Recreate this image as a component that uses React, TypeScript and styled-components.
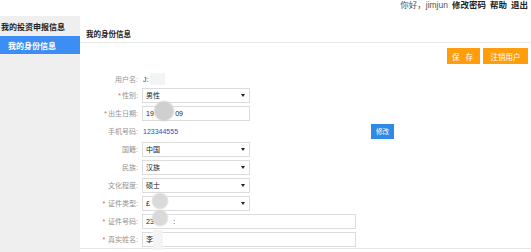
import styled, { createGlobalStyle } from "styled-components";

const GlobalStyle = createGlobalStyle`
  html, body {
    margin: 0;
    padding: 0;
    background: #ffffff;
    font-family: "Liberation Sans", "Noto Sans CJK SC", sans-serif;
    overflow: hidden;
  }
`;

const Page = styled.div`
  width: 531px;
  height: 252px;
  overflow: hidden;
`;

const TopBar = styled.div`
  height: 16px;
  display: flex;
  justify-content: flex-end;
  align-items: flex-start;
  padding-right: 3px;
  font-size: 8.5px;
  line-height: 10px;
`;

const TopText = styled.div`
  display: flex;
  gap: 4px;
`;

const Greeting = styled.span`
  color: #555;
`;

const TopLink = styled.span`
  color: #222;
  font-weight: bold;
`;

const Body = styled.div`
  display: flex;
  height: 236px;
`;

const Sidebar = styled.div`
  width: 80px;
  flex: none;
  background: #efefef;
`;

const SideHeader = styled.div`
  height: 20px;
  display: flex;
  align-items: center;
  padding-left: 1px;
  font-size: 8px;
  font-weight: bold;
  color: #222;
`;

const SideItem = styled.div`
  height: 18px;
  display: flex;
  align-items: center;
  padding-left: 8px;
  background: #3d8ef4;
  color: #fff;
  font-size: 8px;
  font-weight: bold;
  font-family: "Noto Sans CJK SC", serif;
`;

const Main = styled.div`
  flex: 1;
  display: flex;
  flex-direction: column;
  border-bottom: 1px solid #e6e6e6;
  height: 232px;
`;

const TitleBar = styled.div`
  height: 27px;
  border-bottom: 1px solid #e8e8e8;
  display: flex;
  align-items: flex-end;
  padding: 0 0 3px 6px;
  box-sizing: border-box;
  font-size: 7.5px;
  font-weight: bold;
  color: #222;
`;

const Toolbar = styled.div`
  display: flex;
  justify-content: flex-end;
  gap: 3px;
  padding: 5px 3px 0 0;
`;

const OrangeButton = styled.div<{ $w: number }>`
  width: ${(p) => p.$w}px;
  height: 16px;
  background: #ff9d0b;
  color: #fff;
  font-size: 7.5px;
  display: flex;
  align-items: center;
  justify-content: center;
  letter-spacing: ${(p) => (p.$w < 40 ? "2px" : "0")};
`;

const Form = styled.div`
  margin-top: 8px;
  display: grid;
  grid-template-columns: 58px 1fr;
  column-gap: 4px;
`;

const Label = styled.div<{ $h?: number }>`
  height: ${(p) => p.$h ?? 18}px;
  display: flex;
  align-items: center;
  justify-content: flex-end;
  font-size: 7px;
  color: #939393;
  white-space: nowrap;
`;

const Star = styled.span`
  color: #e35a5a;
  margin-right: 1px;
`;

const Cell = styled.div<{ $h?: number }>`
  height: ${(p) => p.$h ?? 18}px;
  display: flex;
  align-items: center;
  font-size: 7px;
  color: #333;
`;

const Field = styled.div<{ $w: number }>`
  position: relative;
  width: ${(p) => p.$w}px;
  height: 15px;
  box-sizing: border-box;
  border: 1px solid #dcdcdc;
  background: #fff;
  display: flex;
  align-items: center;
  padding-left: 3px;
  font-size: 7px;
  color: #222;
`;

const Arrow = styled.span`
  position: absolute;
  right: 4px;
  top: 5px;
  width: 0;
  height: 0;
  border-left: 2.5px solid transparent;
  border-right: 2.5px solid transparent;
  border-top: 3px solid #222;
`;

const Plain = styled.span`
  position: relative;
  color: #444;
  padding-left: 1px;
`;

const Phone = styled.span`
  width: 228px;
  color: #2f4fc2;
  font-size: 7px;
  padding-left: 1px;
`;

const BlueButton = styled.div`
  width: 23px;
  height: 15px;
  background: #2f8ae6;
  color: #fff;
  font-size: 6.5px;
  display: flex;
  align-items: center;
  justify-content: center;
`;

const Smudge = styled.span<{ $x: number; $y: number; $r: number; $c?: string }>`
  position: absolute;
  left: ${(p) => p.$x}px;
  top: ${(p) => p.$y}px;
  width: ${(p) => p.$r * 2}px;
  height: ${(p) => p.$r * 2}px;
  border-radius: 50%;
  background: radial-gradient(circle, ${(p) => p.$c ?? "#d4d4d4"} 55%, rgba(230,230,230,0) 72%);
  pointer-events: none;
`;

const Strip = styled.span<{ $x: number; $y: number; $w: number; $h: number }>`
  position: absolute;
  left: ${(p) => p.$x}px;
  top: ${(p) => p.$y}px;
  width: ${(p) => p.$w}px;
  height: ${(p) => p.$h}px;
  background: #f4f4f4;
  pointer-events: none;
`;

const Select = ({ value, children }: { value: string; children?: React.ReactNode }) => (
  <Field $w={108}>
    {value}
    {children}
    <Arrow />
  </Field>
);

export default function App() {
  return (
    <>
      <GlobalStyle />
      <Page>
        <TopBar>
          <TopText>
            <Greeting>你好，jimjun</Greeting>
            <TopLink>修改密码</TopLink>
            <TopLink>帮助</TopLink>
            <TopLink>退出</TopLink>
          </TopText>
        </TopBar>
        <Body>
          <Sidebar>
            <SideHeader>我的投资申报信息</SideHeader>
            <SideItem>我的身份信息</SideItem>
          </Sidebar>
          <Main>
            <TitleBar>我的身份信息</TitleBar>
            <Toolbar>
              <OrangeButton $w={33}>保 存</OrangeButton>
              <OrangeButton $w={45}>注销用户</OrangeButton>
            </Toolbar>
            <Form>
              <Label $h={14}>用户名:</Label>
              <Cell $h={14}>
                <Plain>
                  J:
                  <Strip $x={8} $y={-3} $w={15} $h={12} />
                </Plain>
              </Cell>

              <Label><Star>*</Star>性别:</Label>
              <Cell><Select value="男性" /></Cell>

              <Label><Star>*</Star>出生日期:</Label>
              <Cell>
                <Field $w={108}>
                  19&nbsp;&nbsp;&nbsp;&nbsp;&nbsp;&nbsp;&nbsp;&nbsp;&nbsp;&nbsp;&nbsp;09
                  <Smudge $x={10} $y={-7} $r={11} $c="#cfcfcf" />
                </Field>
              </Cell>

              <Label>手机号码:</Label>
              <Cell>
                <Phone>123344555</Phone>
                <BlueButton>修改</BlueButton>
              </Cell>

              <Label>国籍:</Label>
              <Cell><Select value="中国" /></Cell>

              <Label>民族:</Label>
              <Cell><Select value="汉族" /></Cell>

              <Label>文化程度:</Label>
              <Cell><Select value="硕士" /></Cell>

              <Label><Star>* </Star>&nbsp;证件类型:</Label>
              <Cell>
                <Select value="£">
                  <Smudge $x={8} $y={-5} $r={9} $c="#dadada" />
                </Select>
              </Cell>

              <Label><Star>* </Star>&nbsp;证件号码:</Label>
              <Cell>
                <Field $w={214}>
                  23&nbsp;&nbsp;&nbsp;&nbsp;&nbsp;&nbsp;&nbsp;&nbsp;&nbsp;&nbsp;:
                  <Smudge $x={8} $y={-6} $r={9} $c="#dadada" />
                </Field>
              </Cell>

              <Label><Star>* </Star>&nbsp;真实姓名:</Label>
              <Cell>
                <Field $w={214}>
                  李
                  <Strip $x={10} $y={-3} $w={10} $h={20} />
                </Field>
              </Cell>
            </Form>
          </Main>
        </Body>
      </Page>
    </>
  );
}
